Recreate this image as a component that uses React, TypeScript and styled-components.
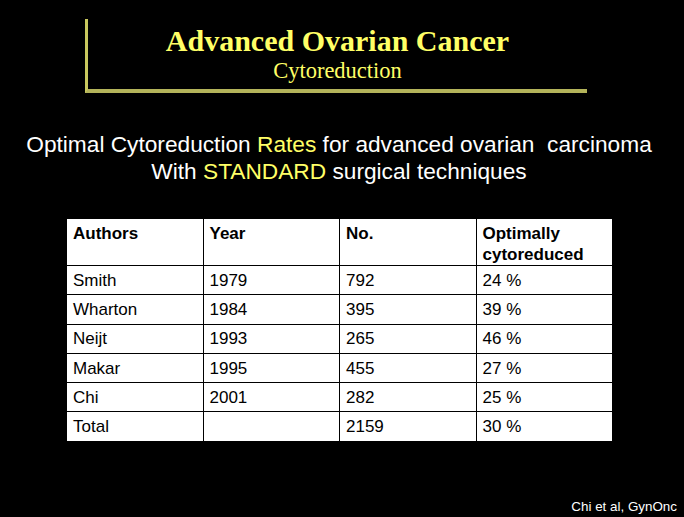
import React from "react"
import styled, { createGlobalStyle } from "styled-components"

const GlobalStyle = createGlobalStyle`
  html, body {
    margin: 0;
    padding: 0;
    background: #000;
  }
`

const Slide = styled.div`
  width: 684px;
  height: 517px;
  background: #000;
  display: flex;
  flex-direction: column;
  align-items: center;
  position: relative;
  overflow: hidden;
  font-family: "Liberation Sans", Arial, sans-serif;
`

const TitleBox = styled.div`
  align-self: flex-start;
  margin: 19px 0 0 85px;
  width: 499px;
  height: 70px;
  border-left: 3px solid #c9c85e;
  border-bottom: 4px solid #b3b35a;
  display: flex;
  flex-direction: column;
  align-items: center;
  font-family: "Liberation Serif", "Times New Roman", serif;
  color: #ffff66;
`

const Title = styled.h1`
  margin: 5px 0 0;
  font-size: 30px;
  font-weight: bold;
  line-height: 33px;
`

const SubTitle = styled.div`
  font-size: 22.5px;
  line-height: 24px;
  margin-top: 2px;
`

const Lead = styled.p`
  margin: 38px 6px 0 0;
  color: #fff;
  font-size: 22.7px;
  line-height: 27px;
  text-align: center;
  white-space: pre;
`

const Hi = styled.span`
  color: #ffff66;
`

const Table = styled.table`
  margin: 33px 5px 0 0;
  width: 547px;
  border-collapse: collapse;
  background: #fff;
  font-size: 17px;
  color: #000;
  table-layout: fixed;
`

const Cell = styled.td<{ $head?: boolean }>`
  border: 1.5px solid #000;
  padding: 0 6px;
  height: ${(p) => (p.$head ? "42px" : "28.3px")};
  vertical-align: ${(p) => (p.$head ? "top" : "middle")};
  padding-top: ${(p) => (p.$head ? "4px" : "0")};
  font-weight: ${(p) => (p.$head ? "bold" : "normal")};
  line-height: 21px;
`

const Credit = styled.div`
  position: absolute;
  right: 7px;
  bottom: 3px;
  color: #fff;
  font-size: 13.4px;
`

const rows = [
  ["Smith", "1979", "792", "24 %"],
  ["Wharton", "1984", "395", "39 %"],
  ["Neijt", "1993", "265", "46 %"],
  ["Makar", "1995", "455", "27 %"],
  ["Chi", "2001", "282", "25 %"],
  ["Total", "", "2159", "30 %"],
]

export default function App() {
  return (
    <>
      <GlobalStyle />
      <Slide>
        <TitleBox>
          <Title>Advanced Ovarian Cancer</Title>
          <SubTitle>Cytoreduction</SubTitle>
        </TitleBox>
        <Lead>
          {"Optimal Cytoreduction "}
          <Hi>Rates</Hi>
          {" for advanced ovarian  carcinoma\nWith "}
          <Hi>STANDARD</Hi>
          {" surgical techniques"}
        </Lead>
        <Table>
          <tbody>
            <tr>
              <Cell $head>Authors</Cell>
              <Cell $head>Year</Cell>
              <Cell $head>No.</Cell>
              <Cell $head>
                Optimally
                <br />
                cytoreduced
              </Cell>
            </tr>
            {rows.map((r) => (
              <tr key={r[0]}>
                {r.map((c, i) => (
                  <Cell key={i}>{c}</Cell>
                ))}
              </tr>
            ))}
          </tbody>
        </Table>
        <Credit>Chi et al, GynOnc</Credit>
      </Slide>
    </>
  )
}
